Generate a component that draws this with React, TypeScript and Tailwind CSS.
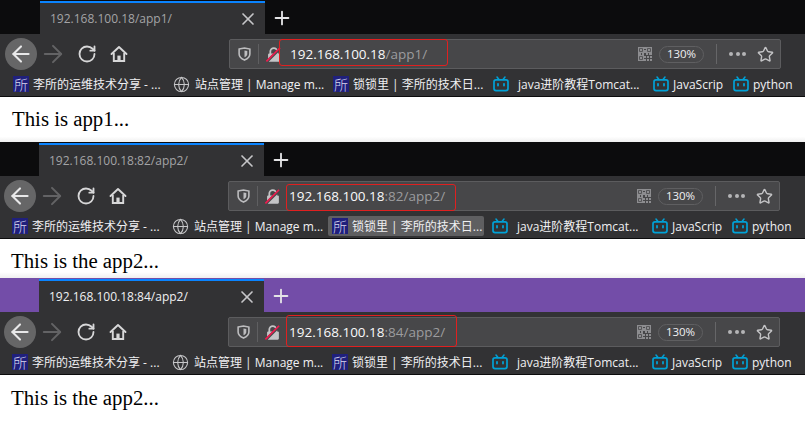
import React from 'react';
import { ArrowLeft, ArrowRight, RotateCw, Globe, Plus, X, Star } from 'lucide-react';

const uiFont = "font-['Open_Sans','Noto_Sans_CJK_SC',sans-serif]";

const Suo = () => (
  <span className="flex h-4 w-4 shrink-0 items-center justify-center bg-[#20207c] font-['Noto_Sans_CJK_SC',sans-serif] text-[14px] leading-none font-light text-[#d8d8ee]">
    所
  </span>
);

const Bili = () => (
  <svg width="16" height="16" viewBox="0 0 16 16" className="shrink-0" fill="none">
    <path d="M4 1l2 2.4M12 1l-2 2.4" stroke="#00a1d6" strokeWidth="1.5" strokeLinecap="round" />
    <rect x="1" y="3.8" width="14" height="10.8" rx="2" stroke="#00a1d6" strokeWidth="1.7" />
    <path d="M5 7.8v1.8M11 7.8v1.8" stroke="#00a1d6" strokeWidth="1.8" strokeLinecap="round" />
  </svg>
);

const Home = () => (
  <svg width="18" height="18" viewBox="0 0 18 18" fill="none">
    <path d="M1.5 9L9 2l7.5 7" stroke="#d7d7d8" strokeWidth="1.9" strokeLinecap="round" strokeLinejoin="round" />
    <path d="M3.8 8v8h10.4V8" stroke="#d7d7d8" strokeWidth="1.9" />
    <rect x="7.4" y="10.6" width="3.2" height="5.4" fill="#d7d7d8" />
  </svg>
);

const Shield = () => (
  <svg width="13" height="14" viewBox="0 0 14 15" fill="none">
    <path d="M1.2 2.2L7 1l5.8 1.2v5.2c0 3-2.6 5.2-5.8 6.6C3.8 12.6 1.2 10.4 1.2 7.4z" stroke="#bdbdbf" strokeWidth="1.7" />
    <path d="M7 3.6l3 .7v3.1c0 1.6-1.4 2.8-3 3.7z" fill="#bdbdbf" />
  </svg>
);

const BrokenLock = () => (
  <svg width="15" height="15" viewBox="0 0 16 16" fill="none">
    <path d="M4.6 7.5V4.8a3.7 3.7 0 0 1 7.4 0v2.7" stroke="#c4c4c6" strokeWidth="1.9" />
    <rect x="2.2" y="6.8" width="12.6" height="8.8" rx="1.2" fill="#c4c4c6" />
    <path d="M0.6 16L15.6 1" stroke="#474749" strokeWidth="2.8" />
    <path d="M0.4 15.4L15 0.8" stroke="#ed1c4e" strokeWidth="1.8" />
  </svg>
);

const Qr = () => (
  <svg width="14" height="14" viewBox="0 0 14 14" fill="none">
    <path d="M.6.6h4.8v4.8H.6zM8.6.6h4.8v4.8H8.6zM.6 8.6h4.8v4.8H.6z" stroke="#8d8d90" strokeWidth="1.2" />
    <path d="M2 2h2v2H2zM10 2h2v2h-2zM2 10h2v2H2zM6 0h2v2H6zM6 3h2v3H6zM0 6h3v2H0zM4 6h2v2H4zM8 6h2v2H8zM11 6h3v2h-3zM6 9h2v2H6zM9 9h2v2H9zM12 9h2v2h-2zM6 12h2v2H6zM9 12h2v2H9zM12 12h2v2h-2z" fill="#8d8d90" />
  </svg>
);

interface BookmarkProps {
  icon: React.ReactNode;
  label: string;
  wide?: boolean;
  active?: boolean;
  iconGap?: string;
}

const Bookmark: React.FC<BookmarkProps> = ({ icon, label, wide, active, iconGap = 'gap-1' }) => (
  <div
    className={`flex h-5 shrink-0 items-center rounded-[2px] px-1 ${iconGap} ${wide ? 'w-[156px]' : 'w-[76px]'} ${active ? 'bg-[#5f5f61]' : ''}`}
  >
    {icon}
    <span className="pt-[1px] whitespace-nowrap text-[12px] leading-5 text-[#f0f0f2]">{label}</span>
  </div>
);

interface WindowProps {
  frameBg: string;
  tabSpacer: string;
  tabWidth: string;
  tabText: string;
  tabColor: string;
  navPad: string;
  host: string;
  rest: string;
  redBox: string;
  bookmarksPad: string;
  activeThird?: boolean;
  page: string;
  pageClass: string;
}

const BrowserWindow: React.FC<WindowProps> = (p) => (
  <section className={`flex flex-col ${uiFont}`}>
    <div className={`flex h-[34px] shrink-0 items-end ${p.frameBg}`}>
      <div className={`shrink-0 ${p.tabSpacer}`} />
      <div className={`flex h-[33px] shrink-0 items-center border-t-2 border-[#0a84ff] bg-[#323234] pr-[7px] pl-[10px] ${p.tabWidth}`}>
        <span className={`flex-1 text-[12px] whitespace-nowrap ${p.tabColor}`}>{p.tabText}</span>
        <X size={20} strokeWidth={2} className="text-[#c6c6c8]" />
      </div>
      <div className="flex h-[33px] w-[34px] items-center justify-center">
        <Plus size={22} strokeWidth={2} className="text-[#e4e4e6]" />
      </div>
    </div>

    <div className={`flex h-10 shrink-0 items-center bg-[#323234] ${p.navPad}`}>
      <div className="flex h-8 w-8 shrink-0 items-center justify-center rounded-full bg-[#666667]">
        <ArrowLeft size={26} strokeWidth={1.9} className="text-[#e8e8e9]" />
      </div>
      <ArrowRight size={28} strokeWidth={1.7} className="ml-[2px] text-[#636365]" />
      <RotateCw size={20} strokeWidth={2.2} className="ml-[10px] text-[#d7d7d8]" />
      <div className="ml-[13px]">
        <Home />
      </div>
      <div className="relative ml-[101px] flex h-[30px] w-[552px] shrink-0 items-center rounded-[2px] border border-[#5c5c5e] bg-[#474749] pr-[6px]">
        <div className="flex w-[21px] justify-end">
          <Shield />
        </div>
        <div className="mx-[7px] h-[20px] w-px bg-[#5f5f61]" />
        <BrokenLock />
        <div className="flex-1 pl-[9px] text-[13.5px] whitespace-nowrap text-[#f9f9fa]">
          {p.host}
          <span className="text-[#9c9c9e]">{p.rest}</span>
        </div>
        <div className={`absolute rounded-[3px] border border-[#e02020] ${p.redBox}`} />
        <Qr />
        <div className="ml-[7px] flex h-[17px] w-[45px] items-center justify-center rounded-full border border-[#5f5f61] text-[11.5px] text-[#f0f0f2]">
          130%
        </div>
        <div className="mx-[12px] h-[20px] w-px bg-[#666668]" />
        <div className="flex w-[17px] justify-between">
          <span className="h-[4px] w-[4px] rounded-full bg-[#b4b4b6]" />
          <span className="h-[4px] w-[4px] rounded-full bg-[#b4b4b6]" />
          <span className="h-[4px] w-[4px] rounded-full bg-[#b4b4b6]" />
        </div>
        <Star size={17} strokeWidth={2} className="ml-[11px] text-[#c4c4c6]" />
      </div>
    </div>

    <div className={`flex h-[23px] shrink-0 gap-1 overflow-hidden border-b border-[#0c0c0d] bg-[#323234] pb-[1px] ${p.bookmarksPad}`}>
      <Bookmark wide icon={<Suo />} label="李所的运维技术分享 - ..." />
      <Bookmark wide icon={<Globe size={17} strokeWidth={1.5} className="shrink-0 text-[#c8c8ca]" />} label="站点管理 | Manage m..." iconGap="gap-[5px]" />
      <Bookmark wide active={p.activeThird} icon={<Suo />} label="锁锁里 | 李所的技术日..." />
      <Bookmark wide icon={<Bili />} label="java进阶教程Tomcat..." iconGap="gap-[9px]" />
      <Bookmark icon={<Bili />} label="JavaScrip" />
      <Bookmark icon={<Bili />} label="python" />
      <Bookmark icon={<Bili />} label="" />
    </div>

    <div className={`shrink-0 font-['Liberation_Serif',serif] text-[20.8px] leading-6 text-black ${p.pageClass}`}>
      {p.page}
    </div>
  </section>
);

export default function App() {
  return (
    <div className="flex h-[446px] w-[805px] flex-col overflow-hidden bg-white">
      <BrowserWindow
        frameBg="bg-[#0c0c0d]"
        tabSpacer="w-[40px]"
        tabWidth="w-[225px]"
        tabText="192.168.100.18/app1/"
        tabColor="text-[#a4a4a6]"
        navPad="pl-[5px]"
        host="192.168.100.18"
        rest="/app1/"
        redBox="left-[49px] -top-[1px] h-[27px] w-[169px]"
        bookmarksPad="pl-[9px]"
        page="This is app1..."
        pageClass="h-[45px] bg-linear-to-b from-white from-[88%] to-[#efefef] pl-3 pt-[10px]"
      />
      <BrowserWindow
        frameBg="bg-[#0c0c0d]"
        tabSpacer="w-[39px]"
        tabWidth="w-[225px]"
        tabText="192.168.100.18:82/app2/"
        tabColor="text-[#a4a4a6]"
        navPad="pl-[4px]"
        host="192.168.100.18"
        rest=":82/app2/"
        redBox="left-[57px] top-[2px] h-[27px] w-[170px]"
        bookmarksPad="pl-[8px]"
        activeThird
        page="This is the app2..."
        pageClass="h-[39px] bg-linear-to-b from-white from-[85%] to-[#efefef] pl-[11px] pt-[10px]"
      />
      <BrowserWindow
        frameBg="bg-[#734da8]"
        tabSpacer="w-[39px]"
        tabWidth="w-[225px]"
        tabText="192.168.100.18:84/app2/"
        tabColor="text-[#f0f0f2]"
        navPad="pl-[4px]"
        host="192.168.100.18"
        rest=":84/app2/"
        redBox="left-[57px] -top-[3px] h-[32px] w-[171px]"
        bookmarksPad="pl-[8px]"
        page="This is the app2..."
        pageClass="h-[72px] bg-white pl-[11px] pt-[11px]"
      />
    </div>
  );
}
